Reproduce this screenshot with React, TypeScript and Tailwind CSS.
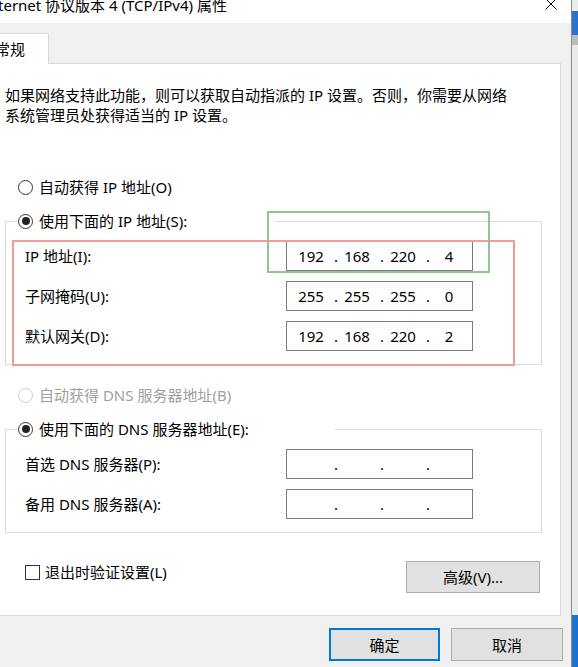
import React from 'react';

const IP_ROWS = [
  { label: 'IP 地址(I):', parts: ['192', '168', '220', '4'] },
  { label: '子网掩码(U):', parts: ['255', '255', '255', '0'] },
  { label: '默认网关(D):', parts: ['192', '168', '220', '2'] },
];

const DNS_ROWS = [
  { label: '首选 DNS 服务器(P):', parts: ['', '', '', ''] },
  { label: '备用 DNS 服务器(A):', parts: ['', '', '', ''] },
];

function Radio({ label, checked, disabled }: { label: string; checked?: boolean; disabled?: boolean }) {
  return (
    <div className="flex items-center h-[20px] whitespace-nowrap">
      <span
        className={`ml-[1px] w-[15px] h-[15px] rounded-full border bg-white flex items-center justify-center ${
          disabled ? 'border-[#cccccc]' : 'border-[#333333]'
        }`}
      >
        {checked && <span className="w-[8px] h-[8px] rounded-full bg-[#222222]" />}
      </span>
      <span className={`ml-[6px] ${disabled ? 'text-[#a0a0a0]' : 'text-black'}`}>{label}</span>
    </div>
  );
}

function IpBox({ parts }: { parts: string[] }) {
  return (
    <div className="w-[187px] h-[30px] border border-[#7a7a7a] bg-white flex items-center pl-[6px]">
      {parts.map((p, i) => (
        <React.Fragment key={i}>
          <span className="w-[36px] text-center">{p}</span>
          {i < 3 && <span className="w-[10px] pl-[5px]">.</span>}
        </React.Fragment>
      ))}
    </div>
  );
}

function AddrGroup({ legend, legendWidth, rows }: { legend: string; legendWidth: string; rows: typeof IP_ROWS }) {
  return (
    <fieldset className="ml-[5px] w-[537px] border border-[#dcdcdc] pb-[13px]">
      <legend className={`ml-[11px] ${legendWidth} bg-white`}>
        <Radio label={legend} checked />
      </legend>
      <div className="mt-[10px] flex flex-col gap-[10px] pl-[19px]">
        {rows.map(r => (
          <div key={r.label} className="flex items-center h-[30px]">
            <span className="w-[261px]">{r.label}</span>
            <IpBox parts={r.parts} />
          </div>
        ))}
      </div>
    </fieldset>
  );
}

export default function App() {
  return (
    <div className="relative w-[578px] h-[667px] overflow-hidden flex bg-[#ececec] text-[15px] leading-[20px] text-black font-['Noto_Sans','Noto_Sans_CJK_SC',sans-serif]">
      <div className="w-[571px] h-full flex flex-col bg-[#f0f0f0]">
        {/* title bar */}
        <div className="h-[23px] shrink-0 bg-white flex items-start">
          <span className="-ml-[2px] -mt-[5px] whitespace-nowrap">ternet 协议版本 4 (TCP/IPv4) 属性</span>
          <svg className="ml-auto mr-[14px] -mt-[2px]" width="12" height="12" viewBox="0 0 12 12">
            <path d="M0.5 0.5 L11.5 11.5 M11.5 0.5 L0.5 11.5" stroke="#000" strokeWidth="1" fill="none" />
          </svg>
        </div>

        <div className="flex-1 flex flex-col pt-[10px]">
          {/* tab */}
          <div className="relative z-10 -ml-[1px] -mb-[1px] w-[50px] h-[31px] border border-b-0 border-[#d9d9d9] bg-white flex items-center">
            <span className="-ml-[5px] whitespace-nowrap">常规</span>
          </div>

          {/* panel */}
          <div className="-ml-[1px] w-[562px] h-[553px] border border-[#d9d9d9] bg-white flex flex-col">
            <p className="ml-[5px] mt-[21px] whitespace-nowrap">
              如果网络支持此功能，则可以获取自动指派的 IP 设置。否则，你需要从网络
              <br />
              系统管理员处获得适当的 IP 设置。
            </p>

            <div className="mt-[52px] pl-[17px]">
              <Radio label="自动获得 IP 地址(O)" />
            </div>
            <div className="mt-[14px]">
              <AddrGroup legend="使用下面的 IP 地址(S):" legendWidth="w-[258px]" rows={IP_ROWS} />
            </div>

            <div className="mt-[20px] pl-[17px]">
              <Radio label="自动获得 DNS 服务器地址(B)" disabled />
            </div>
            <div className="mt-[14px]">
              <AddrGroup legend="使用下面的 DNS 服务器地址(E):" legendWidth="w-[318px]" rows={DNS_ROWS} />
            </div>

            <div className="mt-[28px] flex items-start pl-[25px] pr-[20px]">
              <div className="mt-[1px] h-[20px] flex items-center">
                <span className="w-[15px] h-[15px] border border-[#333333] bg-white" />
                <span className="ml-[5px]">退出时验证设置(L)</span>
              </div>
              <button className="ml-auto w-[134px] h-[32px] border border-[#adadad] bg-[#e1e1e1] flex items-center justify-center">
                高级(V)...
              </button>
            </div>
          </div>

          {/* dialog buttons */}
          <div className="mt-[12px] flex justify-end gap-[11px] pr-[8px]">
            <button className="w-[111px] h-[33px] border-2 border-[#0078d7] bg-[#e1e1e1] flex items-center justify-center">
              确定
            </button>
            <button className="w-[112px] h-[33px] border border-[#adadad] bg-[#e1e1e1] flex items-center justify-center">
              取消
            </button>
          </div>
        </div>
      </div>

      {/* window edge and desktop behind */}
      <div className="w-[1px] h-full bg-[#8a8a8a]" />
      <div className="flex-1 flex flex-col">
        <div className="h-[11px] bg-[#ececec]" />
        <div className="h-[24px] bg-[#2a72d0]" />
        <div className="h-[10px] bg-[#bcbcbc]" />
        <div className="flex-1 bg-[#eaeaea]" />
        <div className="h-[52px] bg-[#1a73d1]" />
      </div>

      {/* annotation boxes drawn over the dialog */}
      <div className="absolute left-[12px] top-[240px] w-[503px] h-[126px] border-2 border-[#f59a9a]" />
      <div className="absolute left-[267px] top-[211px] w-[223px] h-[62px] border-2 border-[#93c493]" />
    </div>
  );
}
